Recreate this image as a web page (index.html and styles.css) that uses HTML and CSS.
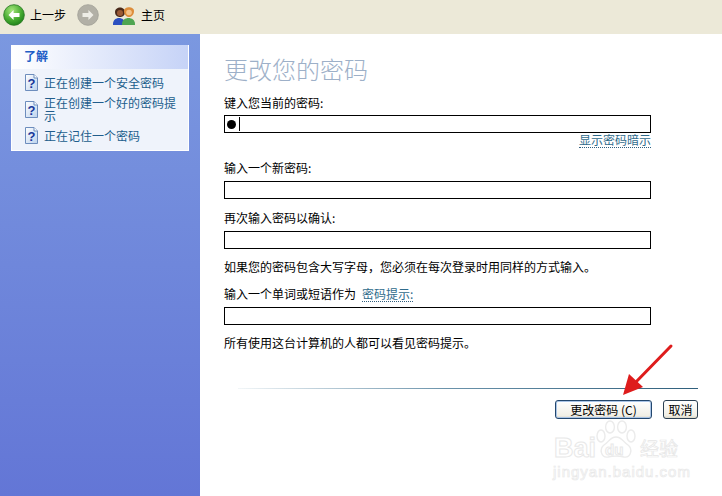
FILE: index.html
```html
<!DOCTYPE html>
<html lang="zh">
<head>
<meta charset="utf-8">
<title>更改您的密码</title>
<link rel="stylesheet" href="styles.css">
</head>
<body>
<svg class="defs" width="0" height="0">
  <defs>
    <linearGradient id="page" x1="0" y1="0" x2="1" y2="1"><stop offset="0" stop-color="#ffffff"/><stop offset="1" stop-color="#bcd2ee"/></linearGradient>
    <symbol id="help" viewBox="0 0 14 17">
      <path d="M1.5 .5 H10 L13.5 4 V16.5 H1.5 Z" fill="url(#page)" stroke="#6d8dbd"/>
      <path d="M10 .5 V4 H13.5" fill="#fff" stroke="#6d8dbd"/>
      <text x="7.4" y="13.5" text-anchor="middle" class="help-q">?</text>
    </symbol>
  </defs>
</svg>
<div class="app">
  <header class="toolbar">
    <svg class="nav-icon" viewBox="0 0 26 26" width="22" height="22">
      <defs><radialGradient id="g" cx="40%" cy="28%" r="78%"><stop offset="0" stop-color="#a6e67c"/><stop offset=".6" stop-color="#45aa30"/><stop offset="1" stop-color="#1a7d18"/></radialGradient></defs>
      <circle cx="13" cy="13" r="12.2" fill="url(#g)" stroke="#2b7a24"/>
      <path d="M12.5 7 L6.5 13 L12.5 19 V15.4 H19.5 V10.6 H12.5 Z" fill="#fff"/>
    </svg>
    <span class="tool-label">上一步</span>
    <svg class="nav-icon fwd" viewBox="0 0 26 26" width="22" height="22">
      <circle cx="13" cy="13" r="12.2" fill="#b2b0a6" stroke="#a3a198"/>
      <path d="M13.5 7 L19.5 13 L13.5 19 V15.4 H6.5 V10.6 H13.5 Z" fill="#eeede6"/>
    </svg>
    <svg class="home-icon" viewBox="0 0 24 22" width="24" height="22">
      <path d="M1 20 C1 12 13 12 13 20 V21 H1 Z" fill="#2c50c0"/>
      <path d="M3 8 C3 2 13 2 13 8 C13 12 10 13 8 13 C6 13 3 12 3 8 Z" fill="#4a2a1a"/>
      <circle cx="8" cy="9" r="3" fill="#9a5a36"/>
      <path d="M10 20 C10 12 23 12 23 20 V21 H10 Z" fill="#4fa552"/>
      <path d="M12 7 C12 2 22 2 22 7 C22 11 19 13 17 13 C15 13 12 11 12 7 Z" fill="#dd8d3c"/>
      <circle cx="17" cy="8.5" r="2.8" fill="#f4c48c"/>
    </svg>
    <span class="tool-label">主页</span>
  </header>
  <div class="body">
    <aside class="sidebar">
      <section class="panel">
        <h2 class="panel-title">了解</h2>
        <ul class="panel-list">
          <li class="panel-item"><svg class="help" width="14" height="17"><use href="#help"/></svg><a class="panel-link">正在创建一个安全密码</a></li>
          <li class="panel-item"><svg class="help" width="14" height="17"><use href="#help"/></svg><a class="panel-link">正在创建一个好的密码提示</a></li>
          <li class="panel-item"><svg class="help" width="14" height="17"><use href="#help"/></svg><a class="panel-link">正在记住一个密码</a></li>
        </ul>
      </section>
    </aside>
    <main class="content">
      <h1 class="title">更改您的密码</h1>
      <label class="label l1">键入您当前的密码:</label>
      <div class="input"><span class="dot"></span><span class="caret"></span></div>
      <div class="hint-row"><a class="dotted">显示密码暗示</a></div>
      <label class="label l2">输入一个新密码:</label>
      <div class="input"></div>
      <label class="label l3">再次输入密码以确认:</label>
      <div class="input"></div>
      <p class="text t1">如果您的密码包含大写字母，您必须在每次登录时用同样的方式输入。</p>
      <label class="label l4">输入一个单词或短语作为<a class="dotted hint-inline">密码提示:</a></label>
      <div class="input"></div>
      <p class="text t2">所有使用这台计算机的人都可以看见密码提示。</p>
      <div class="rule"></div>
      <div class="actions">
        <button class="btn primary">更改密码 (C)</button>
        <button class="btn">取消</button>
      </div>
    </main>
  </div>
  <svg class="arrow" viewBox="0 0 60 60" width="60" height="60">
    <path d="M53 3 L16 41" stroke="#de1c1c" stroke-width="3" stroke-linecap="round"/>
    <path d="M5 52 L11 31 L25 44 Z" fill="#de1c1c"/>
  </svg>
  <div class="mark">
    <svg class="paw" viewBox="0 0 42 40" width="42" height="40">
      <g fill="#fff" stroke="#ebebeb" stroke-width="1.4">
        <ellipse cx="6" cy="16" rx="4" ry="6"/><ellipse cx="15" cy="7" rx="4.4" ry="6"/><ellipse cx="27" cy="7" rx="4.4" ry="6"/><ellipse cx="36" cy="16" rx="4" ry="6"/>
        <path d="M21 17 C27 17 28 22 33 25 C38 29 36 38 29 37 C25 36 17 36 13 37 C6 38 4 29 9 25 C14 22 15 17 21 17 Z"/>
      </g>
    </svg>
    <div class="mark-main">Bai</div>
    <div class="mark-du">du</div>
    <div class="mark-cn">经验</div>
    <div class="mark-sub">jingyan.baidu.com</div>
  </div>
</div>
</body>
</html>
```
FILE: styles.css
```css
* { box-sizing: border-box; }
html, body { margin: 0; padding: 0; }
body { width: 722px; height: 496px; overflow: hidden; background: #fff; font-family: "Noto Sans CJK SC", "Liberation Sans", sans-serif; font-size: 12px; color: #000; }
.defs { position: absolute; }
.app { position: relative; width: 722px; height: 496px; display: flex; flex-direction: column; }

.toolbar { height: 34px; background: #ece9d8; display: flex; align-items: center; padding: 0 0 5px 3px; flex: none; }
.tool-label { font-size: 12px; line-height: 14px; }
.nav-icon { flex: none; }
.nav-icon + .tool-label { margin-left: 5px; }
.fwd { margin-left: 11px; }
.home-icon { margin-left: 13px; margin-right: 5px; flex: none; }

.body { flex: 1; display: flex; min-height: 0; }
.sidebar { width: 200px; flex: none; padding: 11px; background: linear-gradient(180deg, #7b98e0 0%, #6376d6 100%); }
.panel { width: 178px; height: 106px; background: #eff3fb; border: 1px solid #fff; border-top: 0; }
.panel-title { margin: 0; height: 24px; padding: 0 0 0 12px; font-size: 12px; line-height: 22px; font-weight: 700; color: #215dc6; background: linear-gradient(90deg, #fff 0%, #c6d3f7 100%); }
.panel-list { list-style: none; margin: 0; padding: 5px 0 0 12px; }
.panel-item { display: flex; align-items: center; gap: 6px; margin-bottom: 5px; }
.help { flex: none; }
.help-q { font: 700 13px "Liberation Sans", sans-serif; fill: #17359a; }
.panel-link { color: #215d8c; font-size: 12px; line-height: 13px; width: 136px; }

.content { flex: 1; padding: 19px 0 0 24px; }
.title { margin: 0; font-size: 24px; line-height: 32px; font-weight: 300; color: #9db0c8; }
.label { display: block; height: 14px; line-height: 14px; font-size: 12px; }
.l1 { margin-top: 11px; margin-bottom: 5px; }
.l2 { margin-top: 14px; margin-bottom: 6px; }
.l3 { margin-top: 12px; margin-bottom: 6px; }
.l4 { margin-top: 13px; margin-bottom: 6px; }
.input { width: 427px; height: 18px; border: 1px solid #000; border-width: 1px 1.5px 1.5px 1px; background: #fff; display: flex; align-items: center; padding-left: 2px; }
.dot { width: 9px; height: 9px; border-radius: 50%; background: #000; }
.caret { width: 1px; height: 14px; background: #000; margin-left: 3px; }
.hint-row { width: 427px; height: 14px; display: flex; justify-content: flex-end; }
.dotted { color: #2f6b8c; font-size: 12px; line-height: 14px; height: 15px; border-bottom: 1px dotted #2f5f80; }
.hint-inline { display: inline-block; margin-left: 6px; }
.text { margin: 0; font-size: 12px; line-height: 14px; height: 14px; }
.t1 { margin-top: 11px; }
.t2 { margin-top: 11px; }
.rule { margin: 38px 0 0 14px; width: 460px; height: 1px; background: linear-gradient(90deg, #f2f6f8 0%, #6b93ab 45%, #2f5f7c 100%); }
.actions { width: 474px; margin-top: 11px; display: flex; justify-content: flex-end; gap: 11px; }
.btn { height: 19px; width: 35px; padding: 0; border: 1px solid #2b3f52; border-radius: 3px; background: linear-gradient(180deg, #fff 0%, #f1efe6 85%, #dcd8c8 100%); font-family: inherit; font-size: 12px; line-height: 15px; color: #000; }
.primary { width: 97px; border-color: #23476e; box-shadow: inset 0 0 0 1px #a9c4e6; }

.arrow { position: absolute; left: 618px; top: 343px; }
.mark { position: absolute; left: 552px; top: 418px; width: 136px; height: 78px; }
.paw { position: absolute; left: 43px; top: 2px; }
.mark-main { position: absolute; left: 2px; top: 15px; font: 700 27px/30px "Liberation Sans", sans-serif; color: #fff; -webkit-text-stroke: 1px #e8e8e8; }
.mark-du { position: absolute; left: 53px; top: 23px; font: 700 15px/18px "Liberation Sans", sans-serif; color: #fff; -webkit-text-stroke: 1px #e8e8e8; }
.mark-cn { position: absolute; left: 88px; top: 15px; font: 400 19px/30px "Noto Sans CJK SC", sans-serif; color: #fff; -webkit-text-stroke: .7px #e6e6e6; }
.mark-sub { position: absolute; left: 1px; top: 46px; white-space: nowrap; font: 400 15px/16px "Liberation Sans", sans-serif; letter-spacing: 1px; color: #fff; -webkit-text-stroke: .7px #e8e8e8; }
```
